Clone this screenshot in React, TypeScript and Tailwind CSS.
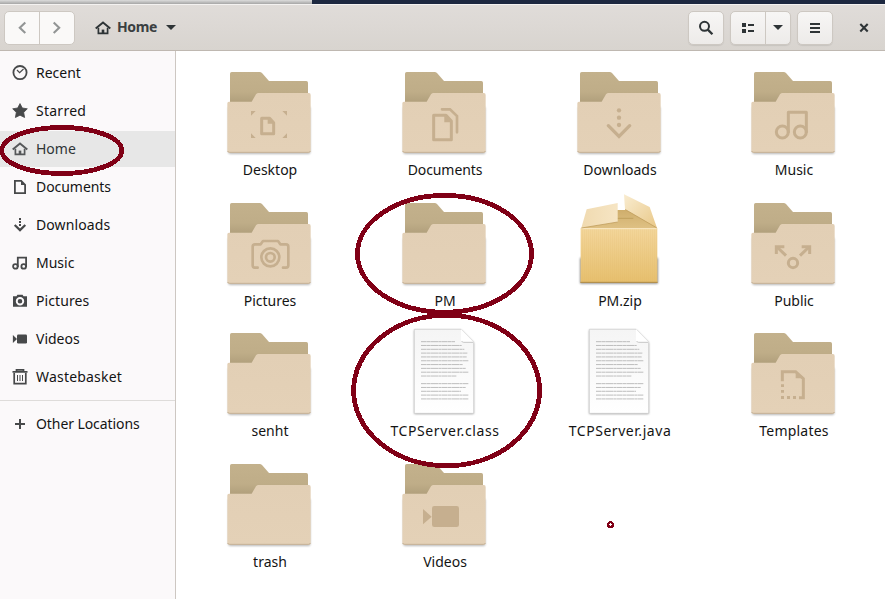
import React from "react";

type P = { className?: string };

function HomeIcon({ className }: P) {
  return (
    <svg viewBox="0 0 16 16" className={className} fill="none" stroke="currentColor">
      <path d="M.7 8.6 8 2.5l7.3 6.1" strokeWidth="1.9" />
      <path d="M3.4 7.8v5.5h9.2V7.8" strokeWidth="1.7" />
      <path d="M8 13.4V9.6" strokeWidth="2.6" />
    </svg>
  );
}

const sideIcons: Record<string, React.ReactNode> = {
  Recent: (
    <>
      <circle cx="8" cy="7.6" r="6.6" fill="none" stroke="currentColor" strokeWidth="1.8" />
      <path d="M5 5 7.6 7.6 11.5 4" fill="none" stroke="currentColor" strokeWidth="1.2" />
    </>
  ),
  Starred: <path d="m8 .6 2.3 4.4 5 .8-3.6 3.6.9 5.1L8 12.2l-4.6 2.3.9-5.1L.7 5.8l5-.8z" stroke="currentColor" strokeWidth=".8" strokeLinejoin="round" />,
  Documents: (
    <>
      <path d="M2.9 1.9h6.3L13.1 5.8v8.3H2.9z" fill="none" stroke="currentColor" strokeWidth="1.8" />
      <path d="M9 2v4h4z" />
    </>
  ),
  Downloads: (
    <>
      <path d="M7 1h2v2H7zM7 4h2v2H7zM7 7h2v2H7z" />
      <path d="M2.7 8 8 13.1 13.3 8" fill="none" stroke="currentColor" strokeWidth="2.2" />
    </>
  ),
  Music: (
    <>
      <circle cx="3.4" cy="11.4" r="2.3" fill="none" stroke="currentColor" strokeWidth="1.8" />
      <circle cx="11.7" cy="11.4" r="2.3" fill="none" stroke="currentColor" strokeWidth="1.8" />
      <path d="M5.8 12V2.7h8.3V12" fill="none" stroke="currentColor" strokeWidth="1.8" />
    </>
  ),
  Pictures: (
    <path
      fillRule="evenodd"
      d="M1 3.3h3.5L5.4 1.7h5.2l.9 1.6H15v10.4H1zM8 4.1a4.2 4.2 0 1 0 0 8.4 4.2 4.2 0 0 0 0-8.4zM8 6a2.3 2.3 0 1 1 0 4.6A2.3 2.3 0 0 1 8 6z"
    />
  ),
  Videos: (
    <>
      <rect x="5" y="3.5" width="10" height="9" rx="1.2" />
      <path d="M.9 4 5 8 .9 12z" />
    </>
  ),
  Wastebasket: (
    <>
      <path d="M.5 2.9h15M4.5 2.7V.9h7v1.8M2.2 4v10.6h11.6V4" fill="none" stroke="currentColor" strokeWidth="1.7" />
      <path d="M5.5 6v6M8 6v6M10.5 6v6" stroke="currentColor" strokeWidth="1" />
    </>
  ),
  "Other Locations": <path d="M8 3v10M3 8h10" stroke="currentColor" strokeWidth="2" />,
};

const sideTracking: Record<string, string> = {
  Starred: "tracking-[0.25px]",
  Downloads: "tracking-[0.1px]",
  Pictures: "tracking-[0.1px]",
  Wastebasket: "tracking-[0.2px]",
  "Other Locations": "tracking-[-0.08px]",
  Documents: "tracking-[-0.05px]",
};

function SideItem({ name, active }: { name: string; active?: boolean }) {
  return (
    <div className={"flex h-9 items-center pl-3 " + (active ? "bg-[#e7e7e7]" : "")}>
      {name === "Home" ? (
        <HomeIcon className="h-4 w-4 text-[#555759]" />
      ) : (
        <svg viewBox="0 0 16 16" className="h-4 w-4 text-[#47494a]" fill="currentColor">
          {sideIcons[name]}
        </svg>
      )}
      <span className={"ml-2 pb-0.5 " + (sideTracking[name] ?? "") + (active ? " text-[#2e3436]" : "")}>{name}</span>
    </div>
  );
}

const G = "#c6af8f";

const emblems: Record<string, React.ReactNode> = {
  Desktop: (
    <>
      <path d="M125 175h24l12 13v33h-36z" fill="none" stroke={G} strokeWidth="9" strokeLinejoin="round" />
      <path d="M143 173l20 18h-20zM93 153h14L93 167zM201 153h-14l14 14zM93 234h14L93 220zM201 234h-14l14-14z" fill={G} />
    </>
  ),
  Documents: (
    <>
      <path d="M116 166h37l16 17v56h-53z" fill="none" stroke={G} strokeWidth="9" strokeLinejoin="round" />
      <path d="M148 166v21h22z" fill={G} />
      <path d="M141 148h24l21 20v49" fill="none" stroke={G} strokeWidth="8" strokeLinecap="round" />
    </>
  ),
  Downloads: (
    <>
      <circle cx="147" cy="151" r="6.5" fill={G} />
      <circle cx="147" cy="173" r="6.5" fill={G} />
      <circle cx="147" cy="195" r="6.5" fill={G} />
      <path d="m115 197 32 32 32-32" fill="none" stroke={G} strokeWidth="10" strokeLinecap="round" />
    </>
  ),
  Music: (
    <g fill="none" stroke={G} strokeWidth="9">
      <circle cx="115" cy="216" r="18" />
      <circle cx="169" cy="216" r="18" />
      <path d="M133 218v-61h54v61" strokeLinejoin="round" />
    </g>
  ),
  Pictures: (
    <g fill="none" stroke={G} strokeWidth="8" strokeLinecap="round" strokeLinejoin="round">
      <path d="M113 230h-9q-6 0-6-7v-56q0-7 7-7h17l7-10h45l7 10h17q7 0 7 7v56q0 7-7 7h-9" />
      <circle cx="151" cy="199" r="27" />
      <circle cx="151" cy="199" r="13" />
    </g>
  ),
  Public: (
    <g fill="none" stroke={G} strokeWidth="9">
      <circle cx="147" cy="216" r="14" />
      <path d="m99 168 27 26M195 168l-27 26" />
      <path d="M97 189v-22h24M173 167h24v22" />
    </g>
  ),
  Templates: (
    <>
      <path d="M115 181v-29h40l23 21v57h-13" fill="none" stroke={G} strokeWidth="9" />
      <path d="M155 150v22h24zM111 190h9v8h-9zM111 207h9v8h-9zM111 225h9v9h-9zM129 225h9v9h-9zM147 225h9v9h-9z" fill={G} />
    </>
  ),
  Videos: (
    <>
      <rect x="111" y="162" width="81" height="63" rx="7" fill={G} />
      <path d="m84 171 26 23-26 23z" fill={G} />
    </>
  ),
};

function Defs() {
  return (
    <svg className="absolute h-0 w-0">
      <defs>
        <linearGradient id="back" x1="0" y1="0" x2="0" y2="1">
          <stop offset="0" stopColor="#c3b18c" />
          <stop offset=".6" stopColor="#bfad88" />
          <stop offset="1" stopColor="#ad9c79" />
        </linearGradient>
        <linearGradient id="front" x1="0" y1="0" x2="0" y2="1">
          <stop offset="0" stopColor="#e2cfb5" />
          <stop offset="1" stopColor="#e4d1b7" />
        </linearGradient>
        <linearGradient id="box" x1="0" y1="0" x2="0" y2="1">
          <stop offset="0" stopColor="#f3d69b" />
          <stop offset="1" stopColor="#e6bf6d" />
        </linearGradient>
        <linearGradient id="inner" x1="0" y1="0" x2="0" y2="1">
          <stop offset="0" stopColor="#cfae6c" />
          <stop offset="1" stopColor="#dfc184" />
        </linearGradient>
        <linearGradient id="flapL" x1="0" y1="0" x2="1" y2="0">
          <stop offset="0" stopColor="#f0dab0" />
          <stop offset="1" stopColor="#f6e5c4" />
        </linearGradient>
        <linearGradient id="flapR" x1="0" y1="0" x2="1" y2="1">
          <stop offset="0" stopColor="#f9ecd0" />
          <stop offset="1" stopColor="#e9c888" />
        </linearGradient>
        <linearGradient id="paper" x1="0" y1="0" x2="0" y2="1">
          <stop offset="0" stopColor="#f5f5f5" />
          <stop offset="1" stopColor="#ffffff" />
        </linearGradient>
        <pattern id="ribs" width="6" height="10" patternUnits="userSpaceOnUse">
          <path d="M1 0v10" stroke="#d9b160" strokeWidth="1.5" opacity=".25" />
        </pattern>
        <filter id="soft" x="-10%" y="-10%" width="120%" height="120%">
          <feGaussianBlur stdDeviation="3" />
        </filter>
      </defs>
    </svg>
  );
}

function Folder({ name }: { name: string }) {
  return (
    <>
      <rect x="25" y="140" width="246" height="142" rx="5" fill="#000" opacity=".28" filter="url(#soft)" />
      <path d="M30 41q0-5 5-5h84q4 0 7 3l21 24h112q5 0 5 5v67H30z" fill="url(#back)" />
      <path d="M22 130q0-5 5-5h68l13-22q3-4 8-4h151q5 0 5 6v168q0 5-5 5H28q-6 0-6-5z" fill="url(#front)" />
      <path d="M23 273q1 4 6 4h237q4 0 5-4" fill="none" stroke="#bfab8f" strokeWidth="2.5" />
      {emblems[name]}
    </>
  );
}

function Zip() {
  return (
    <>
      <rect x="30" y="200" width="234" height="78" rx="3" fill="#000" opacity=".45" filter="url(#soft)" />
      <path d="M34 113 62 57h168l30 56z" fill="url(#inner)" />
      <path d="M140 82h50" stroke="#b79552" strokeWidth="2" />
      <path d="M32 112h230v163H32z" fill="url(#box)" />
      <path d="M32 112h230v163H32z" fill="url(#ribs)" />
      <path d="M32 113h230" stroke="#f9e8c4" strokeWidth="3" />
      <path d="M31 274h232" stroke="#ab8846" strokeWidth="3" />
      <path d="M50 55 143 36v57L34 111z" fill="url(#flapL)" />
      <path d="m34 111 109-18" stroke="#b99553" strokeWidth="2" />
      <path d="M162 10 239 48l22 63-96-56z" fill="url(#flapR)" />
      <path d="m165 55 96 56" stroke="#b99553" strokeWidth="2" />
    </>
  );
}

const lineWidths = [102, 122, 130, 139, 137, 142, 126, 134, 142, 106, 0, 142, 134, 120, 142, 142];

function Sheet() {
  return (
    <>
      <path d="M58 27h140l38 38v214H58z" fill="#000" opacity=".4" filter="url(#soft)" />
      <path d="M58 25h140l38 39v213H58z" fill="url(#paper)" stroke="#cdcdcd" strokeWidth="2" />
      <path d="M198 25v34q0 5 5 5h33z" fill="#fff" />
      <path d="M200 60q1 4 6 4h29" fill="none" stroke="#bdbdbd" strokeWidth="2.5" />
      {lineWidths.map((w, i) =>
        w ? (
          <path key={i} d={`M78 ${62 + i * 11.45}h${w}`} stroke="#b4b4b4" strokeWidth="2.6" strokeDasharray="17 1 11 1 23 1 8 1" />
        ) : null
      )}
    </>
  );
}

const fileTracking: Record<string, string> = {
  "TCPServer.class": "tracking-[0.6px]",
  "TCPServer.java": "tracking-[0.55px]",
  Templates: "tracking-[0.2px]",
  Documents: "tracking-[-0.08px]",
};

function FileItem({ name }: { name: string }) {
  return (
    <div className="flex flex-col items-center">
      <svg viewBox="3 27 288 270" className="h-[90px] w-24 shrink-0 overflow-visible">
        {name === "PM.zip" ? <Zip /> : name.startsWith("TCP") ? <Sheet /> : <Folder name={name} />}
      </svg>
      <span className={"mt-px h-5 pl-0.5 leading-5 " + (fileTracking[name] ?? "")}>{name}</span>
    </div>
  );
}

const files = [
  "Desktop", "Documents", "Downloads", "Music",
  "Pictures", "PM", "PM.zip", "Public",
  "senht", "TCPServer.class", "TCPServer.java", "Templates",
  "trash", "Videos",
];

const places = ["Recent", "Starred", "Home", "Documents", "Downloads", "Music", "Pictures", "Videos", "Wastebasket"];

const btn = "flex h-[34px] rounded-[5px] border border-[#cdc8c2] bg-linear-to-b from-[#f7f6f5] to-[#edebe9] text-[#2e3436] shadow-[0_1px_1px_rgba(0,0,0,0.08)]";

export default function App() {
  return (
    <div className="relative flex h-[599px] w-[885px] flex-col overflow-hidden bg-white font-['Noto_Sans',sans-serif] text-[14px] text-[#141414]">
      <Defs />
      <div className="flex h-1 shrink-0">
        <div className="w-[312px] bg-linear-to-b from-[#dcdcdc] to-[#a6a6a6]" />
        <div className="flex-1 bg-[#1d2840]" />
      </div>
      <header className="flex h-[47px] shrink-0 items-center border-t border-b border-t-[#f4f2f1] border-b-[#bfb8b1] bg-linear-to-b from-[#e0dcd9] to-[#d8d4cf] pl-1">
        <div className="flex h-[34px] w-[71px] rounded-[5px] border border-[#cdc8c2] bg-[#faf9f8] text-[#929595]">
          <div className="flex flex-1 items-center justify-center border-r border-[#cdc8c2]">
            <svg viewBox="0 0 16 16" className="h-4 w-4" fill="none" stroke="currentColor" strokeWidth="2.1"><path d="m11.3 2.5-5.5 5.3 5.5 5.3" /></svg>
          </div>
          <div className="flex flex-1 items-center justify-center">
            <svg viewBox="0 0 16 16" className="h-4 w-4" fill="none" stroke="currentColor" strokeWidth="2.1"><path d="m4.7 2.5 5.5 5.3-5.5 5.3" /></svg>
          </div>
        </div>
        <HomeIcon className="ml-5 h-4 w-4 text-[#2e3436]" />
        <span className="ml-[6px] pb-0.5 font-bold tracking-[-0.35px] text-[#3a3f41]">Home</span>
        <svg viewBox="0 0 10 5" className="ml-[9px] h-[5px] w-[10px] fill-[#2e3436]"><path d="M0 0h10L5 5z" /></svg>
        <div className="ml-auto flex items-center">
          <div className={btn + " w-9 items-center justify-center"}>
            <svg viewBox="0 0 16 16" className="h-4 w-4" fill="none" stroke="currentColor"><circle cx="6.5" cy="6.3" r="4.5" strokeWidth="2" /><path d="m9.8 9.6 4.6 4.6" strokeWidth="2.3" /></svg>
          </div>
          <div className={btn + " ml-[6px] w-[61px]"}>
            <div className="flex w-[35px] items-center justify-center border-r border-[#cdc8c2]">
              <svg viewBox="0 0 16 16" className="h-4 w-4" fill="currentColor"><path d="M2 3h4v4H2zM2 9h4v4H2zM8 4h6v2H8zM8 10h6v2H8z" /></svg>
            </div>
            <div className="flex flex-1 items-center justify-center">
              <svg viewBox="0 0 10 5" className="h-[5px] w-[10px] fill-[#2e3436]"><path d="M0 0h10L5 5z" /></svg>
            </div>
          </div>
          <div className={btn + " ml-[6px] w-9 items-center justify-center"}>
            <svg viewBox="0 0 16 16" className="h-4 w-4" fill="currentColor"><path d="M3 3h10v2H3zM3 7h10v2H3zM3 11h10v2H3z" /></svg>
          </div>
          <svg viewBox="0 0 16 16" className="ml-[23px] mr-[13px] h-4 w-4 text-[#2e3436]" fill="none" stroke="currentColor" strokeWidth="2.1"><path d="m4.3 4 7.4 7.4M11.7 4l-7.4 7.4" /></svg>
        </div>
      </header>
      <div className="flex min-h-0 flex-1">
        <aside className="w-44 shrink-0 border-r border-[#cdc7c2] bg-[#fbf9fa] pt-1">
          <div className="flex flex-col gap-[2px]">
            {places.map((n) => (
              <SideItem key={n} name={n} active={n === "Home"} />
            ))}
          </div>
          <div className="mt-[5px] mb-[5px] h-px bg-[#dedcda]" />
          <SideItem name="Other Locations" />
        </aside>
        <main className="grid grid-cols-[174px_176px_174px_174px] grid-rows-[131px_130px_131px_131px] pt-[18px] pl-[6px]">
          {files.map((n) => (
            <FileItem key={n} name={n} />
          ))}
        </main>
      </div>
      <svg viewBox="0 0 885 599" className="absolute inset-0 h-[599px] w-[885px]" fill="none" stroke="#800016" strokeWidth="4.8" shapeRendering="crispEdges">
        <ellipse cx="61.8" cy="150.5" rx="60" ry="23" />
        <ellipse cx="444.5" cy="253.8" rx="87" ry="58.4" />
        <ellipse cx="446.6" cy="390.5" rx="93" ry="75.3" />
        <circle cx="610.5" cy="524.5" r="2.3" strokeWidth="2.4" />
      </svg>
    </div>
  );
}
